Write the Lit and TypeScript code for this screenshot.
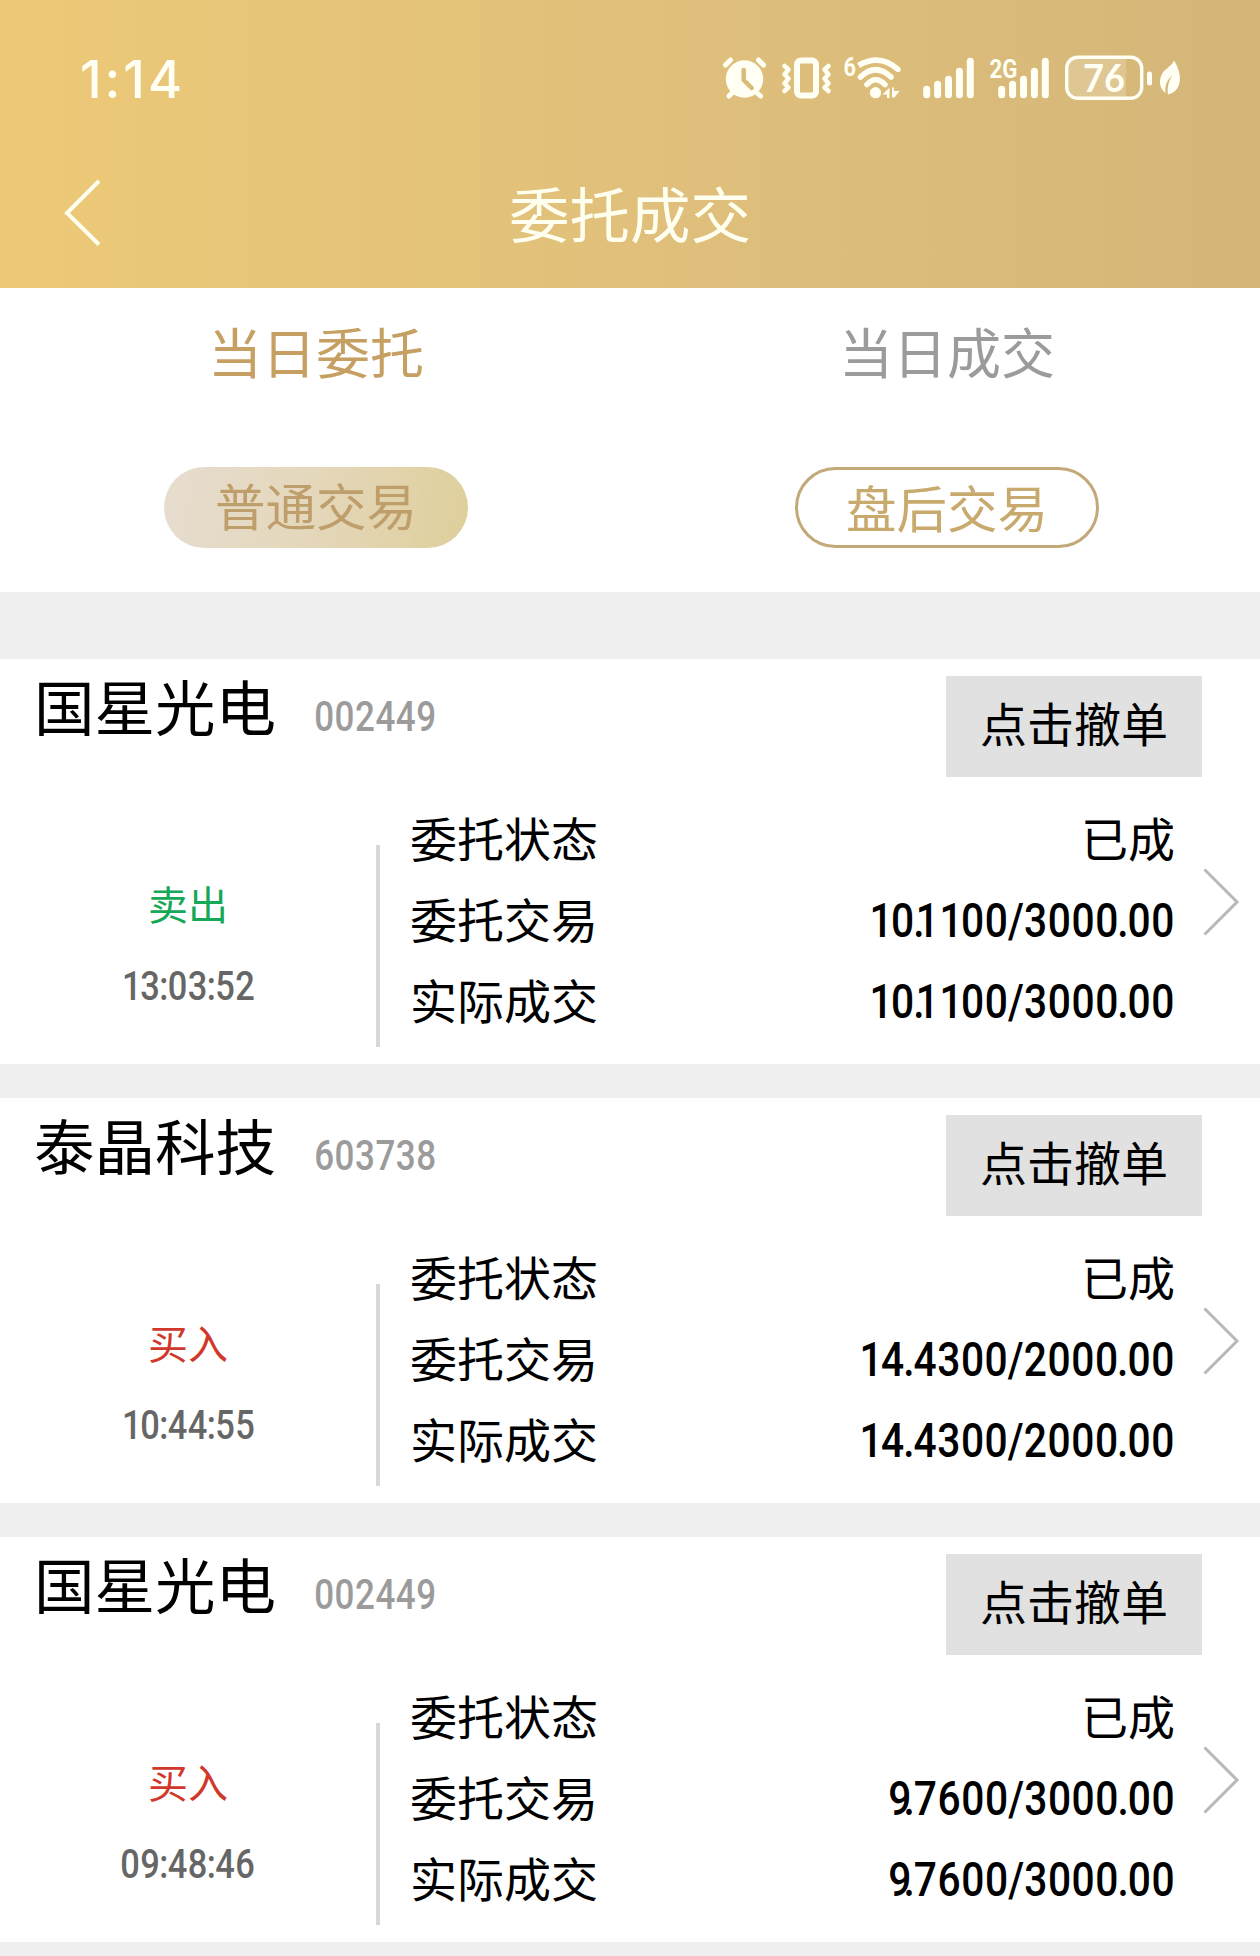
import { LitElement, html, svg, css } from "lit";
import { customElement, property } from "lit/decorators.js";

type Order = {
  name: string;
  code: string;
  side: "buy" | "sell";
  time: string;
  status: string;
  ordered: string;
  filled: string;
};

const ORDERS: Order[] = [
  { name: "国星光电", code: "002449", side: "sell", time: "13:03:52", status: "已成", ordered: "10.1100/3000.00", filled: "10.1100/3000.00" },
  { name: "泰晶科技", code: "603738", side: "buy", time: "10:44:55", status: "已成", ordered: "14.4300/2000.00", filled: "14.4300/2000.00" },
  { name: "国星光电", code: "002449", side: "buy", time: "09:48:46", status: "已成", ordered: "9.7600/3000.00", filled: "9.7600/3000.00" },
];

// Advance widths, kerning and optical shifts of narrow figures, in em.
const ADVANCE: Record<string, number> = { ".": 0.18, ":": 0.18, "/": 0.32 };
const KERN: Record<string, number> = { ".1": -0.203, "9.": -0.143 };
const SHIFT: Record<string, number> = { "1": 0.045 };
const NARROW = 0.84;

@customElement("narrow-figures")
export class NarrowFigures extends LitElement {
  @property() value = "";
  @property({ type: Number }) size = 48;

  static styles = css`
    :host { display: inline-flex; }
    svg { display: block; overflow: visible; }
    .figures { font-family: Roboto, "Liberation Sans", sans-serif; font-weight: 500; text-anchor: middle; fill: currentColor; }
  `;

  render() {
    const em = this.size;
    let cursor = 0;
    const centres: string[] = [];
    [...this.value].forEach((ch, i) => {
      cursor += (KERN[(this.value[i - 1] ?? "") + ch] ?? 0) * em;
      const advance = (ADVANCE[ch] ?? 0.489) * em;
      centres.push(((cursor + advance / 2 + (SHIFT[ch] ?? 0) * em) / NARROW).toFixed(2));
      cursor += advance;
    });
    const cap = em * 0.711;
    return html`<svg width=${cursor} height=${cap}>
      <text class="figures" transform="scale(${NARROW} 1)" x=${centres.join(" ")} y=${cap} font-size=${em}>${this.value}</text>
    </svg>`;
  }
}

@customElement("status-bar")
export class StatusBar extends LitElement {
  static styles = css`
    :host { display: flex; justify-content: space-between; align-items: center; height: 60px; padding: 49px 70px 0 80px; color: #fffff4; }
    .clock { font: 500 52px/60px Inter, sans-serif; letter-spacing: 3px; padding-top: 2px; }
    svg { display: block; }
    .line { fill: none; stroke: currentColor; stroke-linecap: round; stroke-linejoin: round; }
    .butt { stroke-linecap: butt; }
    .tiny { font: 700 26px Roboto, sans-serif; fill: currentColor; }
    .level { font: 700 38px Lato, sans-serif; fill: currentColor; }
  `;

  private bars(x: number) {
    return [85.7, 80.7, 75.7, 67.7, 57.7].map(
      (top, i) => svg`<rect x=${x + i * 10.9} y=${top} width="7" height=${98.3 - top} rx="3.5" fill="currentColor" />`
    );
  }

  render() {
    return html`
      <span class="clock">1:14</span>
      <svg width="470" height="60" viewBox="720 49 470 60">
        <circle cx="744.5" cy="79" r="18.7" fill="currentColor" />
        <path class="line" stroke-width="5" d="M725.5 65l5-5M758.500 60l5 5M733 92l-4 4M756 92l4.500 4" />
        <path d="M743.700 70v10l8 8" fill="none" stroke="#dabc7a" stroke-width="4.500" stroke-linecap="round" />

        <rect class="line" stroke-width="6" x="797" y="60.500" width="19" height="35" rx="4" />
        <path class="line" stroke-width="4.500" d="M784.500 66l4 3.500-4 5 4 4-4 5 4 4-4 3.500M828.500 66l-4 3.500 4 5-4 4 4 5-4 4 4 3.500" />

        <text class="tiny" x="843.500" y="75.500" textLength="12.500" lengthAdjust="spacingAndGlyphs">6</text>
        <path class="line" stroke-width="5.500" d="M860.500 77Q875.500 62.500 891 77M867 84.500Q875.500 75 885 84.500" />
        <path class="line butt" stroke-width="5.500" d="M858.500 65.500Q880 53 898 69.500" />
        <circle cx="898" cy="69.500" r="2.700" fill="currentColor" />
        <circle cx="875.500" cy="92.700" r="5.600" fill="currentColor" />
        <path d="M889.500 87.500v10.500h-2.500v-3.500h-4.500zM892 87.500h2v3.500h5.500l-5 6.500h-2.500z" fill="currentColor" />

        ${this.bars(923.2)}
        <text class="tiny" x="989.500" y="78" textLength="28" lengthAdjust="spacingAndGlyphs">2G</text>
        ${this.bars(998.2)}

        <path d="M1078 57h48v42h-48a11 11 0 0 1-11-11v-20a11 11 0 0 1 11-11z" fill="#fff" fill-opacity=".2" />
        <rect class="line" stroke-width="3.400" x="1066.700" y="57.300" width="75" height="41" rx="11" />
        <text class="level" x="1083" y="92.300" textLength="42" lengthAdjust="spacingAndGlyphs">76</text>
        <rect x="1147" y="71.500" width="5" height="14" rx="2.500" fill="currentColor" />
        <path d="M1174 60.500C1180 70 1182 81 1177.500 88C1175 92 1171 94 1168 94.500C1167 88 1168.500 81 1172.500 75C1167 80 1164.500 86 1165.500 93C1160 89 1158.500 82 1161.500 75C1164 69 1171 67 1174 60.500z" fill="currentColor" />
      </svg>
    `;
  }
}

@customElement("order-card")
export class OrderCard extends LitElement {
  @property({ attribute: false }) order!: Order;

  static styles = css`
    :host { display: block; height: 405px; background: #fff; color: #000; }
    .head { display: flex; align-items: flex-start; height: 101px; padding: 17px 58px 0 34px; }
    .name { font-size: 60.500px; line-height: 58px; }
    .code { color: #9b9b9b; margin: 25px 0 0 38px; }
    .cancel { margin-left: auto; width: 256px; height: 101px; line-height: 92px; text-align: center; font-size: 47px; background: #e1e1e1; }
    .body { display: flex; align-items: flex-start; padding-top: 19px; }
    .side { width: 376px; padding-top: 67px; height: 180px; display: flex; flex-direction: column; align-items: center; }
    .side-name { font-size: 40px; line-height: 80px; height: 82px; }
    .sell { color: #16a757; }
    .buy { color: #d0382b; }
    .time { color: #666; display: flex; align-items: center; height: 82px; }
    .rule { width: 4px; height: 202px; margin-top: 49px; background: #d8d8d8; }
    .rows { width: 765px; margin-left: 30px; }
    .row { display: flex; justify-content: space-between; align-items: center; height: 81.200px; font-size: 47px; line-height: 81px; }
    .row narrow-figures { padding-top: 4px; }
    .go { margin: 72px 0 0 28px; display: block; }
  `;

  render() {
    const o = this.order;
    return html`
      <div class="head">
        <span class="name">${o.name}</span>
        <narrow-figures class="code" .value=${o.code} .size=${41.7}></narrow-figures>
        <span class="cancel">点击撤单</span>
      </div>
      <div class="body">
        <div class="side">
          <span class="side-name ${o.side}">${o.side === "sell" ? "卖出" : "买入"}</span>
          <span class="time"><narrow-figures .value=${o.time} .size=${41}></narrow-figures></span>
        </div>
        <div class="rule"></div>
        <div class="rows">
          <div class="row"><span>委托状态</span><span>${o.status}</span></div>
          <div class="row"><span>委托交易</span><narrow-figures .value=${o.ordered} .size=${48.5}></narrow-figures></div>
          <div class="row"><span>实际成交</span><narrow-figures .value=${o.filled} .size=${48.5}></narrow-figures></div>
        </div>
        <svg class="go" width="37" height="68" viewBox="0 0 37 68">
          <path d="M1.500 1.500L34 34L1.500 66.500" fill="none" stroke="#b8b8b8" stroke-width="3" />
        </svg>
      </div>
    `;
  }
}

@customElement("app-root")
export class AppRoot extends LitElement {
  static styles = css`
    :host { display: block; width: 1260px; height: 1956px; overflow: hidden; background: #efefef; font-family: "Noto Sans CJK SC", sans-serif; }
    .top { height: 288px; background: linear-gradient(90deg, #edc977, #e0c07b 50%, #d4b679); }
    .nav { display: grid; grid-template-columns: 1fr auto 1fr; align-items: center; height: 174px; padding: 34px 64px 0; box-sizing: border-box; color: #fffff0; }
    .nav svg { display: block; }
    .title { font-size: 60.500px; line-height: 70px; margin-top: -3px; }
    .tabs { height: 304px; background: #fff; display: grid; grid-template-columns: 632px 630px; }
    .tab { display: flex; flex-direction: column; align-items: center; }
    .label { font-size: 54px; line-height: 60px; margin-top: 33px; color: #9b9b9b; }
    .on .label { color: #c6a063; }
    .pill { box-sizing: border-box; width: 304px; height: 81px; margin-top: 86px; border-radius: 41px; text-align: center; font-size: 50.500px; line-height: 73px; border: 3px solid #c3a878; color: #c8aa6e; }
    .on .pill { border: 0; background: linear-gradient(100deg, #e7ddd0, #e4d7ba 50%, #dfcf9b); color: #be9e6b; line-height: 74px; }
    .orders { display: flex; flex-direction: column; gap: 34px; margin-top: 67px; }
  `;

  render() {
    return html`
      <div class="top">
        <status-bar></status-bar>
        <div class="nav">
          <svg width="38" height="68" viewBox="0 0 38 68">
            <path d="M35 2L3 34L35 65.500" fill="none" stroke="currentColor" stroke-width="4" />
          </svg>
          <span class="title">委托成交</span>
        </div>
      </div>
      <div class="tabs">
        <div class="tab on"><span class="label">当日委托</span><span class="pill">普通交易</span></div>
        <div class="tab"><span class="label">当日成交</span><span class="pill">盘后交易</span></div>
      </div>
      <div class="orders">
        ${ORDERS.map((o) => html`<order-card .order=${o}></order-card>`)}
      </div>
    `;
  }
}
